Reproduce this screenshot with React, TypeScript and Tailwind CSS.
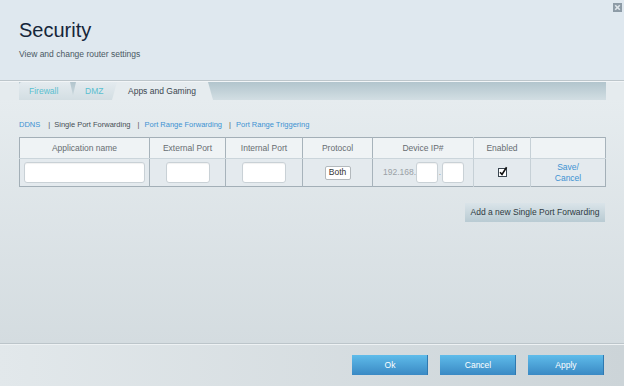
import { useState } from 'react'

const font = { fontFamily: '"Liberation Sans", Arial, sans-serif' }

const columns = [
    { label: 'Application name', width: 'w-[130px]', line: 'border-[#a7b3bb]' },
    { label: 'External Port', width: 'w-[76px]', line: 'border-[#a7b3bb]' },
    { label: 'Internal Port', width: 'w-[77px]', line: 'border-[#a7b3bb]' },
    { label: 'Protocol', width: 'w-[70px]', line: 'border-[#a7b3bb]' },
    { label: 'Device IP#', width: 'w-[101px]', line: 'border-[#c6d0d6]' },
    { label: 'Enabled', width: 'w-[57px]', line: 'border-[#c6d0d6]' },
    { label: '', width: 'w-[75px]', line: 'border-[#a7b3bb]' },
]

function TextBox({ className }: { className: string }) {
    return (
        <input
            type="text"
            className={`h-[21px] rounded-[3px] border border-[#c9d1d6] bg-white shadow-[inset_0_1px_1px_rgba(0,0,0,0.06)] outline-none ${className}`}
        />
    )
}

function CloseIcon() {
    return (
        <svg width="9" height="9" viewBox="0 0 9 9">
            <rect x="0" y="0" width="9" height="9" fill="#8d9ba6" />
            <path d="M2.2 2.2 L6.8 6.8 M6.8 2.2 L2.2 6.8" stroke="#dfe6eb" strokeWidth="1.6" />
        </svg>
    )
}

function CheckBox() {
    return (
        <svg width="11" height="11" viewBox="0 0 11 11">
            <rect x="1.5" y="2.5" width="8" height="8" fill="#fff" stroke="#3a4650" strokeWidth="1" />
            <path d="M3 6.2 L5 8.4 L9.6 1.2" fill="none" stroke="#111" strokeWidth="1.6" />
        </svg>
    )
}

function FooterButton({ label }: { label: string }) {
    return (
        <button className="h-5 w-[76px] bg-gradient-to-b from-[#5fbcea] to-[#3a89c4] text-[8.5px] text-white shadow-[inset_-1px_0_0_#2f79b0]">
            {label}
        </button>
    )
}

export default function App() {
    const [enabled] = useState(true)

    return (
        <div style={font} className="relative flex h-[386px] w-[624px] flex-col overflow-hidden bg-[#e5ebee]">
            <div className="absolute right-[2px] top-[3px]">
                <CloseIcon />
            </div>

            <div className="h-[80px] bg-[#dfe8ef] px-[19px] pt-[20px]">
                <h1 className="text-[20px] leading-[20px] text-[#15263a]">Security</h1>
                <p className="mt-[10px] text-[8.5px] leading-[8.5px] text-[#4a5864]">View and change router settings</p>
            </div>
            <div className="h-px bg-[#bdc6cb]" />
            <div className="h-px bg-[#f2f5f7]" />

            {/* tabs */}
            <div className="flex h-[18px] pl-[19px] pr-[18px]">
                <div className="flex flex-1 bg-gradient-to-b from-[#b2c5cd] to-[#d2dee3]">
                    <div className="flex w-[55px] items-center rounded-tl-[3px] bg-gradient-to-b from-[#e4ebef] to-[#d3dee3] pl-[10px] text-[8.5px] text-[#59bfd0] [clip-path:polygon(0_0,51px_0,55px_100%,0_100%)]">
                        Firewall
                    </div>
                    <div className="ml-[-2px] flex w-[46px] items-center bg-gradient-to-b from-[#e4ebef] to-[#d3dee3] pl-[13px] text-[8.5px] text-[#59bfd0] [clip-path:polygon(4px_0,100%_0,100%_100%,0_100%)]">
                        DMZ
                    </div>
                    <div className="relative z-10 ml-[-6px] flex w-[101px] items-center bg-[#e6ecef] pl-[16px] text-[8.5px] text-[#3c4750] [clip-path:polygon(5px_0,calc(100%_-_5px)_0,100%_100%,0_100%)]">
                        Apps and Gaming
                    </div>
                </div>
            </div>

            {/* content */}
            <div className="flex flex-1 flex-col bg-gradient-to-b from-[#e6ecef] to-[#d4dce0] px-[19px]">
                <div className="mt-[21px] flex items-center text-[7.5px] leading-[8px]">
                    <span className="text-[#3d92d2]">DDNS</span>
                    <span className="ml-[8px] mr-[4px] text-[#555]">|</span>
                    <span className="text-[#474f55]">Single Port Forwarding</span>
                    <span className="ml-[7px] mr-[5px] text-[#555]">|</span>
                    <span className="text-[#3d92d2]">Port Range Forwarding</span>
                    <span className="ml-[7px] mr-[5px] text-[#555]">|</span>
                    <span className="text-[#3d92d2]">Port Range Triggering</span>
                </div>

                <table className="mt-[8px] w-[586px] table-fixed border-collapse border border-[#a3afb7] text-[8.5px]">
                    <thead>
                        <tr className="h-[21px] bg-[#eff3f5]">
                            {columns.map((c, i) => (
                                <th
                                    key={i}
                                    className={`${c.width} border-b border-b-[#cbd5db] border-r ${c.line} font-normal text-[#676d72]`}
                                >
                                    {c.label}
                                </th>
                            ))}
                        </tr>
                    </thead>
                    <tbody>
                        <tr className="h-[28px] bg-[#e4eaee]">
                            <td className={`border-r ${columns[0].line} px-[4px]`}>
                                <TextBox className="w-[121px]" />
                            </td>
                            <td className={`border-r ${columns[1].line}`}>
                                <div className="flex justify-center">
                                    <TextBox className="w-[44px]" />
                                </div>
                            </td>
                            <td className={`border-r ${columns[2].line}`}>
                                <div className="flex justify-center">
                                    <TextBox className="w-[44px]" />
                                </div>
                            </td>
                            <td className={`border-r ${columns[3].line}`}>
                                <div className="flex justify-center">
                                    <span className="flex h-[14px] w-[26px] items-center justify-center rounded-[2px] border border-[#b3b9bd] bg-white text-[#333]">
                                        Both
                                    </span>
                                </div>
                            </td>
                            <td className={`border-r ${columns[4].line}`}>
                                <div className="flex items-center pl-[10px] text-[#9aa1a6]">
                                    <span className="w-[33px]">192.168.</span>
                                    <TextBox className="w-[22px]" />
                                    <span className="w-[4px] text-center">.</span>
                                    <TextBox className="w-[22px]" />
                                </div>
                            </td>
                            <td className={`border-r ${columns[5].line}`}>
                                <div className="flex justify-center pb-[2px]">{enabled && <CheckBox />}</div>
                            </td>
                            <td className="text-center leading-[11px] text-[#3d92d2]">
                                Save/
                                <br />
                                Cancel
                            </td>
                        </tr>
                    </tbody>
                </table>

                <div className="mt-[16px] flex justify-end">
                    <button className="h-[19px] w-[140px] bg-gradient-to-b from-[#dae4e9] to-[#b9cbd3] text-[8.5px] text-[#2e3a42]">
                        Add a new Single Port Forwarding
                    </button>
                </div>
            </div>

            {/* footer */}
            <div className="h-px bg-[#bcc5ca]" />
            <div className="h-px bg-[#eef2f4]" />
            <div className="flex h-[41px] items-start justify-end gap-[12px] bg-gradient-to-r from-[#e2e8eb] to-[#ccd4d8] pr-[20px] pt-[10px]">
                <FooterButton label="Ok" />
                <FooterButton label="Cancel" />
                <FooterButton label="Apply" />
            </div>
        </div>
    )
}
